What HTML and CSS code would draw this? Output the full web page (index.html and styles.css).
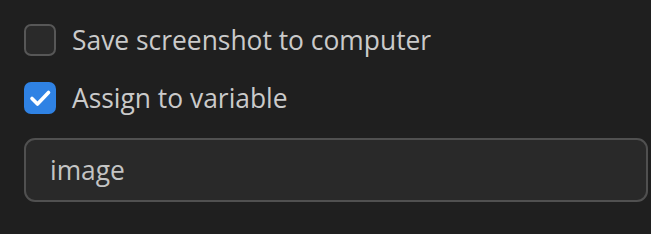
FILE: index.html
```html
<!DOCTYPE html>
<html lang="en">
<head>
<meta charset="utf-8">
<title>Screenshot options</title>
<link rel="stylesheet" href="styles.css">
</head>
<body>
  <div class="panel">
    <label class="row">
      <span class="box"></span>
      <span class="label">Save screenshot to computer</span>
    </label>
    <label class="row">
      <span class="box checked">
        <svg viewBox="0 0 32 32" width="32" height="32" aria-hidden="true">
          <path d="M8 16.5 L13.5 22 L24.5 10.5" fill="none" stroke="#ffffff" stroke-width="3.6" stroke-linecap="round" stroke-linejoin="round"/>
        </svg>
      </span>
      <span class="label">Assign to variable</span>
    </label>
    <div class="field">image</div>
  </div>
</body>
</html>
```
FILE: styles.css
```css
html, body {
  margin: 0;
  padding: 0;
  background: #1f1f1f;
}
body {
  width: 651px;
  height: 234px;
  overflow: hidden;
  font-family: "Open Sans", "Noto Sans", sans-serif;
}
.panel {
  display: flex;
  flex-direction: column;
  padding: 24px 3px 0 24px;
}
.row {
  display: flex;
  align-items: center;
  gap: 16px;
  height: 32px;
  margin-bottom: 26px;
}
.row + .row {
  margin-bottom: 24px;
}
.box {
  box-sizing: border-box;
  width: 32px;
  height: 32px;
  border-radius: 7px;
  border: 2px solid #575757;
  background: #2a2a2a;
  flex: none;
  display: flex;
}
.box.checked {
  border: none;
  background: #2f82e4;
}
.label {
  color: #cacaca;
  font-size: 26.4px;
  line-height: 32px;
  white-space: nowrap;
}
.field {
  box-sizing: border-box;
  height: 64px;
  border: 2px solid #505050;
  border-radius: 11px;
  background: #292929;
  color: #c4c4c4;
  font-size: 26.4px;
  display: flex;
  align-items: center;
  padding: 0 0 0 24px;
}
```
